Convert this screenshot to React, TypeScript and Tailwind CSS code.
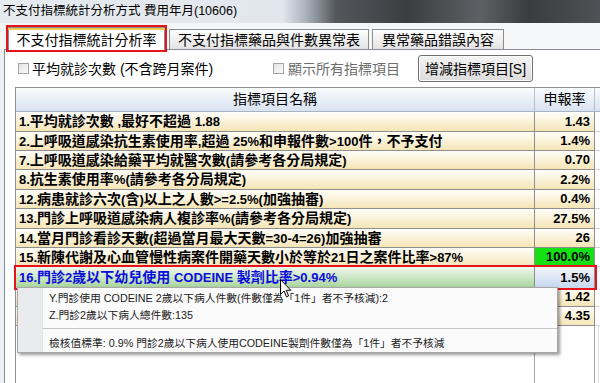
import React from 'react';

type Row = { name: string; value: string; h: number; kind?: 'green' | 'selected' };

const rows: Row[] = [
  { name: '1.平均就診次數 ,最好不超過 1.88', value: '1.43', h: 20 },
  { name: '2.上呼吸道感染抗生素使用率,超過 25%和申報件數>100件，不予支付', value: '1.4%', h: 19 },
  { name: '7.上呼吸道感染給藥平均就醫次數(請參考各分局規定)', value: '0.70', h: 19 },
  { name: '8.抗生素使用率%(請參考各分局規定)', value: '2.2%', h: 20 },
  { name: '12.病患就診六次(含)以上之人數>=2.5%(加強抽審)', value: '0.4%', h: 19 },
  { name: '13.門診上呼吸道感染病人複診率%(請參考各分局規定)', value: '27.5%', h: 20 },
  { name: '14.當月門診看診天數(超過當月最大天數=30-4=26)加強抽審', value: '26', h: 19 },
  { name: '15.新陳代謝及心血管慢性病案件開藥天數小於等於21日之案件比率>87%', value: '100.0%', h: 19, kind: 'green' },
  { name: '16.門診2歲以下幼兒使用 CODEINE 製劑比率>0.94%', value: '1.5%', h: 21, kind: 'selected' },
  { name: '', value: '1.42', h: 19 },
  { name: '', value: '4.35', h: 19 },
];

// CJK glyphs in the old grid are a touch wider than the latin ones
function Mixed({ text }: { text: string }) {
  const parts = text.split(/([\u3000-\u9fff\uff00-\uffef]+)/);
  return (
    <span className="whitespace-pre">
      {parts.map((p, i) => (i % 2 === 1 ? <span key={i} className="text-[14px]">{p}</span> : <span key={i}>{p}</span>))}
    </span>
  );
}

function Checkbox() {
  return <span className="w-[11px] h-[11px] border border-[#a4a4a4] bg-gradient-to-br from-[#e4e4e4] to-[#fbfbfb] shrink-0" />;
}

function Cursor() {
  return (
    <svg className="absolute left-[280px] top-[279px] z-30" width="12" height="19" viewBox="0 0 12 19">
      <path d="M0.5 0.5 L0.5 15.5 L4 12 L6.5 17.8 L8.6 16.9 L6.2 11.3 L10.8 11.3 Z" fill="#fff" stroke="#000" strokeWidth="1" />
    </svg>
  );
}

export default function App() {
  return (
    <div className="relative w-[600px] h-[383px] overflow-hidden flex flex-col bg-[#eef1f4] font-['Liberation_Sans','Noto_Sans_CJK_TC',sans-serif] text-black">
      {/* title bar */}
      <div className="h-[23px] shrink-0 pl-[3px] text-[12.5px] leading-[22px] bg-[linear-gradient(90deg,#e6ebf0_0%,#e2e7ed_47%,#a9b1ba_51%,#53575c_56%,#3b3d41_68%,#5d6064_80%,#3a3c3f_88%,#4e5155_100%)]">
        不支付指標統計分析方式 費用年月(10606)
      </div>

      {/* tabs */}
      <div className="h-[26px] shrink-0 flex items-end pl-[8px] bg-[#f4f6f8]">
        <div className="relative z-10 -mb-px w-[157px] h-[23px] bg-white border-x border-t border-[#898c95] outline-2 outline-[#e5141b] text-[14px] leading-[20px] text-center">
          <div className="h-[2px] bg-[#efc94a] mx-[-1px]" />
          不支付指標統計分析率
        </div>
        <div className="ml-[4px] w-[200px] h-[20px] border-x border-t border-[#8c8c8c] bg-gradient-to-b from-[#fdfdfd] to-[#e3e3e3] text-[14px] leading-[20px] text-center">
          不支付指標藥品與件數異常表
        </div>
        <div className="ml-[3px] w-[132px] h-[20px] border-x border-t border-[#8c8c8c] bg-gradient-to-b from-[#fdfdfd] to-[#e3e3e3] text-[14px] leading-[20px] text-center">
          異常藥品錯誤內容
        </div>
      </div>

      {/* panel */}
      <div className="flex-1 ml-[4px] flex flex-col border-t border-l border-[#898c95] bg-white min-h-0">
        <div className="h-[37px] shrink-0 flex items-center pl-[13px] text-[14px]">
          <div className="w-[255px] flex items-center gap-[3px]">
            <Checkbox />
            <span className="leading-[20px]">平均就診次數 (不含跨月案件)</span>
          </div>
          <div className="w-[145px] flex items-center gap-[4px] text-[#6d6d6d]">
            <Checkbox />
            <span className="leading-[20px]">顯示所有指標項目</span>
          </div>
          <button className="w-[115px] h-[27px] rounded-[3px] border border-[#707070] bg-gradient-to-b from-[#f4f4f4] to-[#dcdcdc] text-[14px] leading-[24px] shadow-[inset_0_0_0_1px_#fcfcfc]">
            增減指標項目[S]
          </button>
        </div>

        {/* table */}
        <div className="flex-1 ml-[10px] flex flex-col border-t border-l border-[#8f8f8f] min-h-0">
          <div className="h-[24px] shrink-0 flex border-b border-[#a8b4c4] bg-gradient-to-b from-[#fafcfe] to-[#d8e3f0] text-[14px] leading-[23px]">
            <div className="w-[519px] text-center border-r border-[#b4c0cf]">指標項目名稱</div>
            <div className="w-[60px] text-center border-r border-[#b4c0cf]">申報率</div>
            <div className="flex-1" />
          </div>

          {rows.map((r, i) => {
            const sel = r.kind === 'selected';
            return (
              <div key={i} className="flex shrink-0 text-[13px] font-bold leading-[18px]" style={{ height: r.h }}>
                <div className={`w-[579px] flex relative ${sel ? 'outline-2 outline-[#e5141b] z-10' : ''}`}>
                  <div
                    className={`w-[519px] pl-[3px] whitespace-nowrap overflow-hidden flex items-center border-r border-[#8f8f8f] ${
                      sel
                        ? 'bg-gradient-to-b from-[#f0f8ee] to-[#a6d39a] text-[#0c0cdc]'
                        : 'border-b bg-gradient-to-b from-[#fffefa] to-[#f5e5b6]'
                    }`}
                  >
                    <Mixed text={r.name} />
                  </div>
                  <div
                    className={`w-[60px] pr-[4px] flex items-center justify-end border-r border-[#8f8f8f] ${
                      sel
                        ? 'bg-gradient-to-b from-[#f3f6fb] to-[#c6d7ee]'
                        : r.kind === 'green'
                        ? 'border-b bg-[#14e014]'
                        : 'border-b bg-gradient-to-b from-[#fffefa] to-[#f5e5b6]'
                    }`}
                  >
                    {r.value}
                  </div>
                </div>
                <div className={`flex-1 bg-white ${sel ? '' : 'border-b border-[#d4d4d4]'}`} />
              </div>
            );
          })}

          <div className="flex-1 flex">
            <div className="w-[519px] border-r border-[#a8a8a8]" />
            <div className="w-[60px] border-r border-[#a8a8a8]" />
            <div className="w-[4px] border-r border-[#dcdcdc]" />
          </div>
        </div>
      </div>

      {/* hover popup */}
      <div className="absolute left-[17px] top-[287px] w-[541px] h-[66px] z-20 flex border border-[#a7a7a7] bg-[#fbfbfb] shadow-[2px_2px_3px_rgba(0,0,0,0.4)] text-[10.75px] text-[#1b1b1b]">
        <div className="w-[25px] shrink-0 bg-[#e9ebee] border-r border-[#e2e3e3]" />
        <div className="flex-1 flex flex-col pt-[2px]">
          <div className="pl-[6px] h-[17px] leading-[17px] whitespace-nowrap">Y.門診使用 CODEINE 2歲以下病人件數(件數僅為「1件」者不予核減):2</div>
          <div className="pl-[6px] h-[17px] leading-[17px] whitespace-nowrap">Z.門診2歲以下病人總件數:135</div>
          <div className="mt-[4px] h-px bg-[#c6c6c6]" />
          <div className="mt-[6px] pl-[6px] h-[17px] leading-[17px] whitespace-nowrap">檢核值標準: 0.9% 門診2歲以下病人使用CODEINE製劑件數僅為「1件」者不予核減</div>
        </div>
      </div>

      <Cursor />
    </div>
  );
}
